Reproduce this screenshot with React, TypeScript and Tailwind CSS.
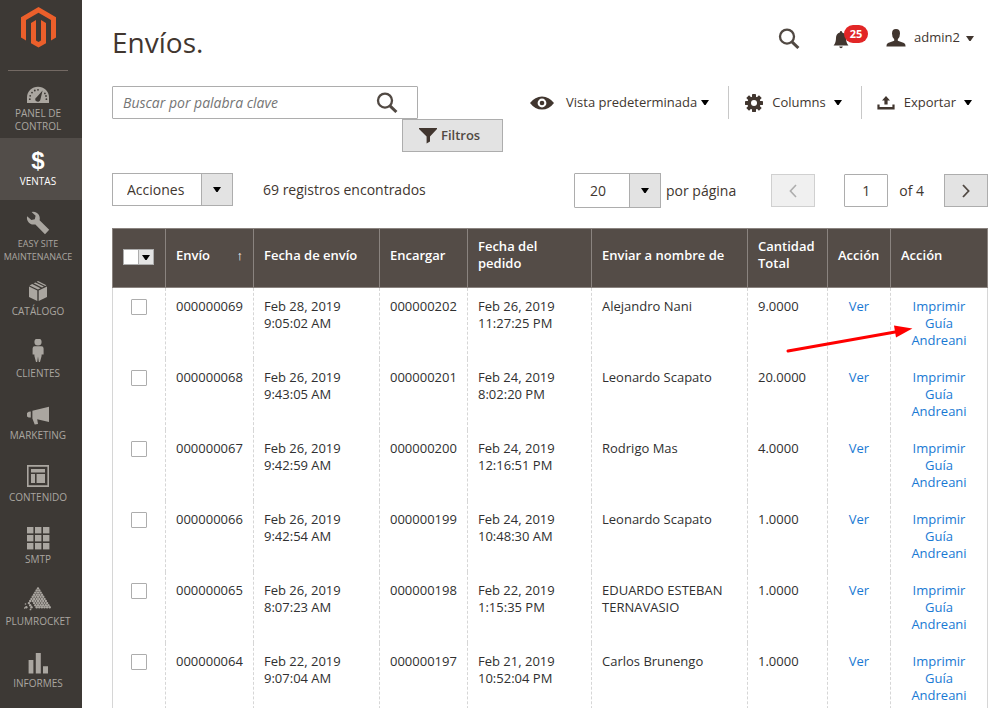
import type { ReactNode } from "react";
import clsx from "clsx";

type IconProps = { className?: string };

function MenuSvg({ children }: { children: ReactNode }) {
  return (
    <svg width="28" height="28" viewBox="0 0 28 28" fill="currentColor" aria-hidden="true">
      {children}
    </svg>
  );
}

function Logo() {
  return (
    <svg width="35" height="41" viewBox="0 0 35 41" fill="#eb5f2b" aria-hidden="true">
      <path d="M17.5 0L35 10.2V30.6L30 33.5V13L17.5 5.8L5 13V33.5L0 30.6V10.2Z" />
      <path d="M10 15.9L15 13V33.4L17.5 34.9L20 33.4V13L25 15.9V36.3L17.5 40.6L10 36.3Z" />
    </svg>
  );
}

function DashboardIcon() {
  return (
    <MenuSvg>
      <path d="M3 24V18.5A11 10.8 0 0 1 25 18.5V24Z" />
      <g fill="#3d3935">
        <path d="M18.6 11.6L16.4 20.6A2.6 2.4 0 1 1 12.6 18.2Z" />
        {[[5.8, 20.2], [6.2, 16.8], [8, 13.6], [10.8, 11.5], [14, 10.8], [20.9, 14.4], [22, 17], [22.4, 20.2]].map(([x, y]) => (
          <circle key={`${x}-${y}`} cx={x} cy={y} r="0.9" />
        ))}
      </g>
    </MenuSvg>
  );
}

function WrenchIcon() {
  return (
    <MenuSvg>
      <path d="M7.6 2.9A6.8 6.8 0 0 1 15.6 11.2L25.2 20.8L21 25.2L11.4 15.4A6.8 6.8 0 0 1 3.1 7.2L7.4 11L10.8 10.2L11.6 6.8Z" />
    </MenuSvg>
  );
}

function BoxIcon() {
  return (
    <MenuSvg>
      <path d="M5 9.6L13.3 13.6V24L5 20Z" />
      <path d="M14.7 13.6L23 9.6V20L14.7 24Z" />
      <path d="M5.6 8.4L8.2 7L16.5 11.2L14 12.5Z" />
      <path d="M9.6 6.3L11.4 5.4L19.9 9.5L18 10.5Z" />
      <path d="M12.7 4.8L14 4.1L22.4 8.3L21.2 8.9Z" />
    </MenuSvg>
  );
}

function PersonIcon() {
  return (
    <MenuSvg>
      <circle cx="14" cy="3" r="3.6" />
      <path d="M10.6 7.2H17.4Q19.6 7.2 19.6 9.6V15.6H17.6V17L16 23H14.8L14 17.6L13.2 23H12L10.4 17V15.6H8.6V9.6Q8.6 7.2 10.6 7.2Z" />
    </MenuSvg>
  );
}

function MegaphoneIcon() {
  return (
    <MenuSvg>
      <path d="M8.4 9.8L25 5.8V21L13.2 18.2L14 23L10.7 23.4L8.4 17.4Z" />
      <path d="M3 12Q4.5 10.6 6.8 10.6V16.6Q4.5 16.6 3 15.4Z" />
    </MenuSvg>
  );
}

function LayoutIcon() {
  return (
    <MenuSvg>
      <path fillRule="evenodd" d="M3 2H25V24H3ZM4.6 3.8V22.2H23.4V3.8Z" />
      <path d="M7 6H21V9.4H7ZM7 11H11V20H7ZM12.6 11H21V20H12.6Z" />
    </MenuSvg>
  );
}

function GridIcon() {
  return (
    <MenuSvg>
      {[2, 10, 18].map((y) => [3, 11, 19].map((x) => <rect key={`${x}-${y}`} x={x} y={y} width="6.4" height="6.4" />))}
    </MenuSvg>
  );
}

function PlumrocketIcon() {
  return (
    <MenuSvg>
      {[0, 1, 2, 3, 4, 5, 6, 7, 8, 9].map((row) =>
        Array.from({ length: row + 1 }, (_, i) => {
          // the lower left corner of the triangle breaks up into loose dots
          if (row > 6 && i < row - 5 && (row + i) % 2 === 0) return null;
          return <circle key={`${row}-${i}`} cx={14 - row * 1.3 + i * 2.6} cy={1.4 + row * 2.1} r="1.2" />;
        }),
      )}
      <circle cx="1.5" cy="17" r="0.8" />
      <circle cx="0.6" cy="21" r="0.8" />
      <circle cx="6.5" cy="22.4" r="0.9" />
    </MenuSvg>
  );
}

function BarsIcon() {
  return (
    <MenuSvg>
      <path d="M4.6 11H9.4V24.4H4.6ZM11.8 4H16.8V24.4H11.8ZM19 17.2H24V24.4H19Z" />
    </MenuSvg>
  );
}

function SearchIcon() {
  return (
    <svg width="22" height="22" viewBox="0 0 22 22" fill="none" stroke="#514943" aria-hidden="true">
      <circle cx="9" cy="8.6" r="7" strokeWidth="2.3" />
      <path d="M14 13.8L20.4 20" strokeWidth="3" />
    </svg>
  );
}

function BellIcon() {
  return (
    <svg width="16" height="18" viewBox="0 0 16 18" fill="#41362f" aria-hidden="true">
      <path d="M8 0Q9 0 9.2 1.4Q13 2.6 13 7Q13 12 15.4 14.4H0.6Q3 12 3 7Q3 2.6 6.8 1.4Q7 0 8 0Z" />
      <path d="M6.2 15.6H9.8Q9.4 17.2 8 17.2T6.2 15.6Z" />
    </svg>
  );
}

function UserIcon() {
  return (
    <svg width="20" height="18" viewBox="0 0 20 18" fill="#41362f" aria-hidden="true">
      <path d="M10 0Q14 0 14 4.4Q14 8.4 11.8 10.2V11.8L18 14Q19.6 14.8 19.6 17.4H0.4Q0.4 14.8 2 14L8.2 11.8V10.2Q6 8.4 6 4.4Q6 0 10 0Z" />
    </svg>
  );
}

function EyeIcon() {
  return (
    <svg width="24" height="14" viewBox="0 0 24 14" fill="#41362f" aria-hidden="true">
      <path fillRule="evenodd" d="M0 7Q5 0.4 12 0.4T24 7Q19 13.6 12 13.6T0 7ZM12 2.6A4.4 4.4 0 1 0 12 11.4A4.4 4.4 0 1 0 12 2.6Z" />
      <circle cx="12" cy="7" r="2.3" />
    </svg>
  );
}

function GearIcon() {
  return (
    <svg width="18" height="18" viewBox="0 0 18 18" fill="#41362f" aria-hidden="true">
      {[0, 45, 90, 135].map((deg) => (
        <rect key={deg} x="7" y="0" width="4" height="18" rx="0.4" transform={`rotate(${deg} 9 9)`} />
      ))}
      <circle cx="9" cy="9" r="6.6" />
      <circle cx="9" cy="9" r="3" fill="#fff" />
    </svg>
  );
}

function ExportIcon() {
  return (
    <svg width="18" height="14" viewBox="0 0 18 14" fill="#41362f" aria-hidden="true">
      <path d="M9 0L13 4.4H10.6V8.6H7.4V4.4H5Z" />
      <path d="M0.4 8.4H2.6V11H15.4V8.4H17.6V13.4H0.4Z" />
    </svg>
  );
}

function FunnelIcon() {
  return (
    <svg width="18" height="16" viewBox="0 0 18 16" fill="#41362f" aria-hidden="true">
      <path d="M0 0H18V1L11 8.6V13.6L7.6 15.6V8.6L0 1Z" />
    </svg>
  );
}

function Caret({ className = "text-black" }: IconProps) {
  return (
    <svg className={className} width="8" height="5" viewBox="0 0 8 5" fill="currentColor" aria-hidden="true">
      <path d="M0 0H8L4.6 5H3.4Z" />
    </svg>
  );
}

const MENU: { label: string; icon: ReactNode; active?: boolean; small?: boolean }[] = [
  { label: "PANEL DE CONTROL", icon: <DashboardIcon /> },
  { label: "VENTAS", icon: <span className="text-2xl/7 font-bold font-['Liberation_Sans',sans-serif]">$</span>, active: true },
  { label: "EASY SITE MAINTENANACE", icon: <WrenchIcon />, small: true },
  { label: "CATÁLOGO", icon: <BoxIcon /> },
  { label: "CLIENTES", icon: <PersonIcon /> },
  { label: "MARKETING", icon: <MegaphoneIcon /> },
  { label: "CONTENIDO", icon: <LayoutIcon /> },
  { label: "SMTP", icon: <GridIcon /> },
  { label: "PLUMROCKET", icon: <PlumrocketIcon /> },
  { label: "INFORMES", icon: <BarsIcon /> },
];

const ROWS = [
  { id: "000000069", shipped: ["Feb 28, 2019", "9:05:02 AM"], order: "000000202", ordered: ["Feb 26, 2019", "11:27:25 PM"], name: "Alejandro Nani", qty: "9.0000" },
  { id: "000000068", shipped: ["Feb 26, 2019", "9:43:05 AM"], order: "000000201", ordered: ["Feb 24, 2019", "8:02:20 PM"], name: "Leonardo Scapato", qty: "20.0000" },
  { id: "000000067", shipped: ["Feb 26, 2019", "9:42:59 AM"], order: "000000200", ordered: ["Feb 24, 2019", "12:16:51 PM"], name: "Rodrigo Mas", qty: "4.0000" },
  { id: "000000066", shipped: ["Feb 26, 2019", "9:42:54 AM"], order: "000000199", ordered: ["Feb 24, 2019", "10:48:30 AM"], name: "Leonardo Scapato", qty: "1.0000" },
  { id: "000000065", shipped: ["Feb 26, 2019", "8:07:23 AM"], order: "000000198", ordered: ["Feb 22, 2019", "1:15:35 PM"], name: "EDUARDO ESTEBAN TERNAVASIO", qty: "1.0000" },
  { id: "000000064", shipped: ["Feb 22, 2019", "9:07:04 AM"], order: "000000197", ordered: ["Feb 21, 2019", "10:52:04 PM"], name: "Carlos Brunengo", qty: "1.0000" },
];

const TH = "border border-[#8a837f] px-2.5 pb-1.5 text-left font-semibold";
const TD = "border-l border-dashed border-[#d6d6d6] p-2.5 align-top";

function Sidebar() {
  return (
    <nav className="w-[82px] shrink-0 bg-[#3d3935]">
      <a href="#" aria-label="Magento" className="flex h-[70px] justify-center pt-[7px] pr-[5px]">
        <Logo />
      </a>
      <div className="mr-3.5 ml-2 -mb-px h-px bg-[#736963]" />
      {MENU.map((item) => (
        <a
          key={item.label}
          href="#"
          className={clsx(
            "flex min-h-[62px] flex-col items-center pt-[9px] pr-1.5 pb-[5px] text-center",
            item.active ? "bg-[#524d49] text-white" : "text-[#aaa6a0]",
          )}
        >
          <span className="flex h-7 items-center justify-center">{item.icon}</span>
          <span className={clsx("max-w-[76px]", item.small ? "text-[9px]/[13px]" : "text-[10px]/[13px]")}>{item.label}</span>
        </a>
      ))}
    </nav>
  );
}

function Header() {
  return (
    <header className="flex h-[86px] items-center justify-between pr-3.5 pb-0.5">
      <h1 className="text-[28px] text-[#41362f]">Envíos.</h1>
      <div className="-mt-2 flex items-center">
        <button type="button" aria-label="Buscar" className="mt-0.5">
          <SearchIcon />
        </button>
        <button type="button" aria-label="Notificaciones" className="relative mt-1 ml-[33px]">
          <BellIcon />
          <span className="absolute -top-1.5 left-[11px] flex h-[18px] w-6 items-center justify-center rounded-full bg-[#e22626] text-[11px] font-bold text-white">
            25
          </span>
        </button>
        <button type="button" className="ml-[37px] flex items-center text-[13px]">
          <UserIcon />
          <span className="mr-1.5 ml-2">admin2</span>
          <Caret className="text-[#41362f]" />
        </button>
      </div>
    </header>
  );
}

function Toolbar() {
  return (
    <div className="flex items-start justify-between">
      <div className="flex w-[391px] flex-col">
        <div className="relative w-[306px]">
          <input
            type="text"
            aria-label="Buscar por palabra clave"
            placeholder="Buscar por palabra clave"
            className="h-[33px] w-full rounded-[1px] border border-[#adadad] pr-12 pl-2.5 text-[14px] placeholder:text-[#757575] placeholder:italic"
          />
          <button type="button" aria-label="Buscar" className="absolute top-1.5 right-5">
            <SearchIcon />
          </button>
        </div>
        <button
          type="button"
          className="flex h-[33px] w-[101px] items-center gap-1 self-end border border-[#adadad] bg-[#e3e3e3] pl-4 text-[13px] font-semibold text-[#514943]"
        >
          <FunnelIcon />
          Filtros
        </button>
      </div>
      <div className="flex h-[33px] text-[13px]">
        <button type="button" className="flex items-center pr-[19px]">
          <EyeIcon />
          <span className="mr-1 ml-3">Vista predeterminada</span>
          <Caret />
        </button>
        <button type="button" className="flex items-center border-l border-[#c8c8c8] pr-[19px] pl-4">
          <GearIcon />
          <span className="mr-2 ml-[9px]">Columns</span>
          <Caret />
        </button>
        <button type="button" className="flex items-center border-l border-[#c8c8c8] pr-4 pl-[15px]">
          <ExportIcon />
          <span className="mr-2 ml-[9px]">Exportar</span>
          <Caret />
        </button>
      </div>
    </div>
  );
}

function ArrowBox() {
  return (
    <span className="pointer-events-none absolute inset-y-0 right-0 flex w-8 items-center justify-center border border-[#adadad] bg-[#e3e3e3]">
      <Caret />
    </span>
  );
}

function Pager() {
  return (
    <div className="mt-[21px] mb-5 flex h-[35px] items-center justify-between text-[14px]">
      <div className="-mt-0.5 flex items-center">
        <div className="relative w-[121px]">
          <select aria-label="Acciones" className="h-[33px] w-full appearance-none border border-[#adadad] pl-3.5">
            <option>Acciones</option>
          </select>
          <ArrowBox />
        </div>
        <span className="ml-[30px]">69 registros encontrados</span>
      </div>
      <div className="flex items-center">
        <div className="relative w-[87px]">
          <select id="page-size" className="h-[35px] w-full appearance-none rounded-[1px] border border-[#adadad] pl-[15px]">
            <option>20</option>
            <option>30</option>
            <option>50</option>
          </select>
          <ArrowBox />
        </div>
        <label htmlFor="page-size" className="ml-[5px]">
          por página
        </label>
        <button
          type="button"
          disabled
          aria-label="Página anterior"
          className="ml-[35px] flex h-[33px] w-11 items-center justify-center border border-[#d0d0d0] bg-[#f0f0f0] text-[#adadad]"
        >
          <svg width="8" height="14" viewBox="0 0 8 14" fill="none" stroke="currentColor" strokeWidth="1.6" aria-hidden="true">
            <path d="M7 1L1.4 7L7 13" />
          </svg>
        </button>
        <input
          id="page"
          type="text"
          defaultValue="1"
          aria-label="Página"
          className="ml-[29px] h-[33px] w-11 rounded-[1px] border border-[#adadad] text-center"
        />
        <label htmlFor="page" className="ml-[11px]">
          of 4
        </label>
        <button
          type="button"
          aria-label="Página siguiente"
          className="ml-5 flex h-[33px] w-11 items-center justify-center border border-[#adadad] bg-[#e3e3e3] text-[#514943]"
        >
          <svg width="8" height="14" viewBox="0 0 8 14" fill="none" stroke="currentColor" strokeWidth="1.8" aria-hidden="true">
            <path d="M1 1L6.6 7L1 13" />
          </svg>
        </button>
      </div>
    </div>
  );
}

function Grid() {
  return (
    <div className="relative">
      <table className="w-full table-fixed border-collapse text-[13px]/[17px]">
        <colgroup>
          <col className="w-[53px]" />
          <col className="w-[88px]" />
          <col className="w-[126px]" />
          <col className="w-[88px]" />
          <col className="w-[124px]" />
          <col />
          <col className="w-[80px]" />
          <col className="w-[63px]" />
          <col className="w-[97px]" />
        </colgroup>
        <thead className="bg-[#544c47] text-white">
          <tr className="h-[59px]">
            <th className={TH}>
              <span className="mt-1 flex h-4 w-[31px] border border-[#adadad]">
                <input type="checkbox" aria-label="Seleccionar todo" className="w-3.5 appearance-none bg-white" />
                <button type="button" aria-label="Opciones de selección" className="flex flex-1 items-center justify-center border-l border-[#adadad] bg-[#e3e3e3]">
                  <Caret />
                </button>
              </span>
            </th>
            <th className={TH}>
              <span className="flex justify-between">
                Envío <span className="font-normal">↑</span>
              </span>
            </th>
            <th className={TH}>Fecha de envío</th>
            <th className={TH}>Encargar</th>
            <th className={TH}>
              Fecha del
              <br />
              pedido
            </th>
            <th className={TH}>Enviar a nombre de</th>
            <th className={TH}>Cantidad Total</th>
            <th className={TH}>Acción</th>
            <th className={TH}>Acción</th>
          </tr>
        </thead>
        <tbody className="border-x border-[#d6d6d6] text-[#303030]">
          {ROWS.map((row) => (
            <tr key={row.id}>
              <td className="px-2.5 pt-[11px] align-top">
                <input
                  type="checkbox"
                  aria-label={`Seleccionar ${row.id}`}
                  className="mx-auto block size-4 appearance-none rounded-[1px] border border-[#adadad] bg-white checked:bg-[#514943]"
                />
              </td>
              <td className={TD}>{row.id}</td>
              <td className={TD}>
                {row.shipped[0]}
                <br />
                {row.shipped[1]}
              </td>
              <td className={TD}>{row.order}</td>
              <td className={TD}>
                {row.ordered[0]}
                <br />
                {row.ordered[1]}
              </td>
              <td className={TD}>{row.name}</td>
              <td className={TD}>{row.qty}</td>
              <td className={clsx(TD, "text-center")}>
                <a href="#" className="text-[#1979d3]">
                  Ver
                </a>
              </td>
              <td className={clsx(TD, "text-center")}>
                <a href="#" className="text-[#1979d3]">
                  Imprimir
                  <br />
                  Guía
                  <br />
                  Andreani
                </a>
              </td>
            </tr>
          ))}
        </tbody>
      </table>
      {/* callout pointing at the print link */}
      <svg className="pointer-events-none absolute top-24 right-[75px]" width="127" height="30" viewBox="0 0 127 30" aria-hidden="true">
        <path d="M2 27L112 7.5" stroke="#f00" strokeWidth="3" strokeLinecap="round" />
        <path d="M108 1.4L126.4 4.4L110 13.4Z" fill="#f00" />
      </svg>
    </div>
  );
}

export default function App() {
  return (
    <div className="flex h-screen overflow-hidden bg-white font-['Open_Sans','Noto_Sans',sans-serif] text-[#41362f]">
      <Sidebar />
      <main className="min-w-0 flex-1 pr-[5px] pl-[30px]">
        <Header />
        <Toolbar />
        <Pager />
        <Grid />
      </main>
    </div>
  );
}
